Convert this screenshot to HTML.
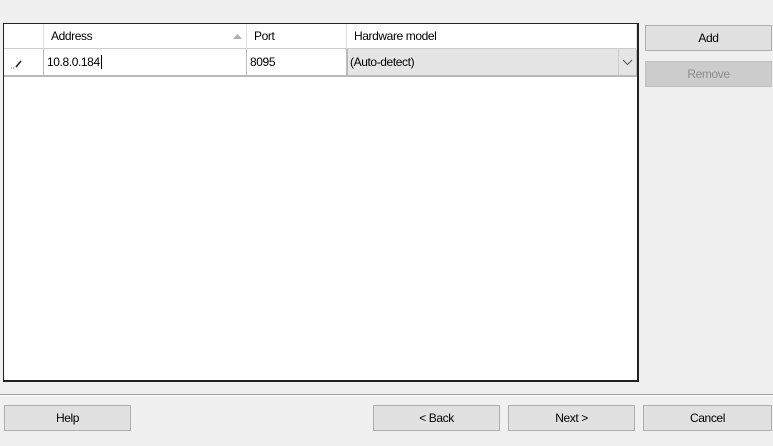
<!DOCTYPE html>
<html><head><style>
body{margin:0;width:773px;height:446px;background:#f0f0f0;position:relative;overflow:hidden;font-family:"Liberation Sans Narrow","Liberation Sans",sans-serif;font-size:12px;letter-spacing:-0.4px;color:#000}
.a{position:absolute;box-sizing:border-box}
.btn{background:#e1e1e1;border:1px solid #adadad;text-align:center;line-height:24px}
.grid{left:3px;top:23px;width:636px;height:359px;background:#fff;border:1px solid #222;border-right-width:2px;border-bottom-width:2px}
.h{top:0;height:25px;border-right:1px solid #e0e0e0;border-bottom:1px solid #ccc;line-height:24px;padding-left:7px}
.c{top:25px;height:28px;border-bottom:2px solid #b9b9b9;line-height:26px;padding-left:3px;border-right:1px solid #b9b9b9}
</style></head><body>
<div class="a grid">
 <div class="a h" style="left:0;width:40px"></div>
 <div class="a h" style="left:40px;width:203px">Address<svg style="position:absolute;right:4px;top:9px" width="9" height="6"><path d="M0 6L4.5 1L9 6Z" fill="#b0b0b0"/></svg></div>
 <div class="a h" style="left:243px;width:100px">Port</div>
 <div class="a h" style="left:343px;width:290px">Hardware model</div>
 <div class="a c" style="left:0;width:40px;padding-left:6px"><svg width="14" height="14" style="margin-top:7px"><path d="M1 12h1M3 12h1" stroke="#555"/><path d="M6 11L11 5" stroke="#222" stroke-width="1.6"/></svg></div>
 <div class="a c" style="left:40px;width:203px">10.8.0.184<span style="border-left:1px solid #000;margin-left:1px"></span></div>
 <div class="a c" style="left:243px;width:100px">8095</div>
 <div class="a c" style="left:343px;width:290px;background:#e5e5e5;border-left:1px solid #b9b9b9;padding-left:2px">(Auto-detect)<span style="position:absolute;right:0;top:0;width:17px;height:26px;border-left:1px solid #ccc"><svg width="17" height="26"><path d="M4 11L8.5 15.5L13 11" fill="none" stroke="#555"/></svg></span></div>
</div>
<div class="a btn" style="left:645px;top:25px;width:127px;height:26px">Add</div>
<div class="a btn" style="left:645px;top:61px;width:127px;height:26px;background:#cccccc;border-color:#bfbfbf;color:#8d8d8d">Remove</div>
<div class="a" style="left:0;top:394px;width:773px;height:1px;background:#a0a0a0"></div>
<div class="a" style="left:0;top:395px;width:773px;height:1px;background:#fff"></div>
<div class="a btn" style="left:4px;top:405px;width:127px;height:26px">Help</div>
<div class="a btn" style="left:373px;top:405px;width:127px;height:26px">&lt; Back</div>
<div class="a btn" style="left:508px;top:405px;width:127px;height:26px">Next &gt;</div>
<div class="a btn" style="left:643px;top:405px;width:129px;height:26px">Cancel</div>
</body></html>
